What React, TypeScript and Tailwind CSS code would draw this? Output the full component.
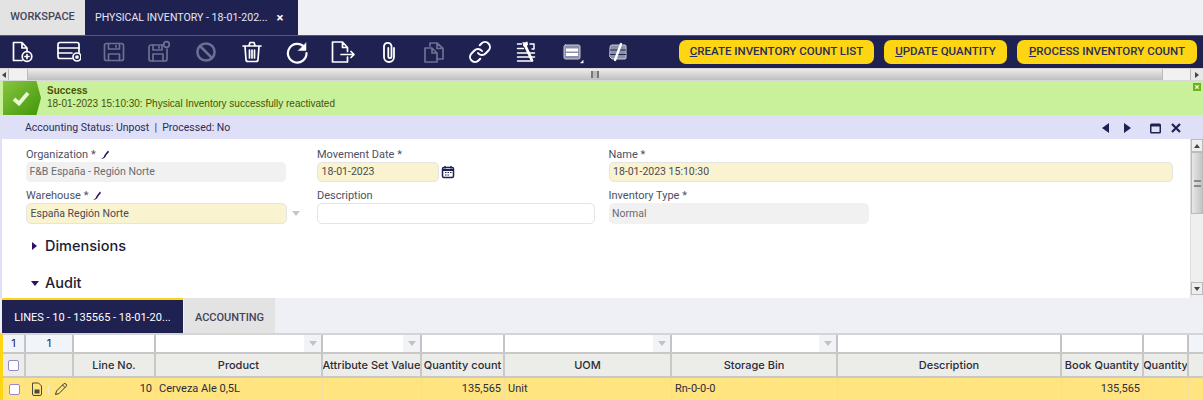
import { Link as LinkIcon } from 'lucide-react';

const NAVY = '#1f2251';

function ToolIcon({ children, dim = false }: { children: React.ReactNode; dim?: boolean }) {
  return (
    <div className="w-[45.75px] flex justify-center shrink-0">
      <svg
        width="24"
        height="24"
        viewBox="0 0 24 24"
        fill="none"
        stroke={dim ? '#6d7090' : '#ffffff'}
        strokeWidth="1.7"
        strokeLinecap="round"
        strokeLinejoin="round"
      >
        {children}
      </svg>
    </div>
  );
}

function Toolbar() {
  return (
    <div className="h-[33px] bg-[#1f2251] flex items-center border-t border-[#55587a] shrink-0">
      <ToolIcon>
        <path d="M11 20.500H2.500v-18H11l5 5.500v3M11 2.500V8h5" />
        <circle cx="16" cy="16.500" r="4.800" />
        <path d="M14 16.500h4M16 14.500v4" />
      </ToolIcon>
      <ToolIcon>
        <path d="M15 18.500H3a2 2 0 0 1-2-2v-12a2 2 0 0 1 2-2h17a2 2 0 0 1 2 2v8" />
        <path d="M1 8h21M1 13h14" />
        <circle cx="20" cy="17" r="4" />
        <circle cx="20" cy="17" r="1" fill="#fff" />
      </ToolIcon>
      <ToolIcon dim>
        <rect x="2.500" y="3.500" width="19" height="17" rx="2" />
        <path d="M6.500 3.500V9h11V3.500M14 5.500v1.500M6.500 20.500V14h11v6.500" />
      </ToolIcon>
      <ToolIcon dim>
        <path d="M15 5H3a2 2 0 0 0-2 2v12a2 2 0 0 0 2 2h14a2 2 0 0 0 2-2V9" />
        <path d="M5 5v5h9V5M11 6.500V8M5 21v-7h10v7" />
        <circle cx="18.500" cy="4.500" r="2.800" />
      </ToolIcon>
      <ToolIcon dim>
        <circle cx="12" cy="12" r="8.600" strokeWidth="2.500" />
        <path d="M6 6l12 12" strokeWidth="2.500" />
      </ToolIcon>
      <ToolIcon>
        <path d="M3 6h18M9 5.500L10 2.500h4l1 3M5 6.500l1 13a2 2 0 0 0 2 2h8a2 2 0 0 0 2-2l1-13M9.500 10v8M12 10v8M14.500 10v8" />
      </ToolIcon>
      <ToolIcon>
        <path d="M19.500 7.500a9.300 9.300 0 1 0 2 5.500" strokeWidth="2.200" />
        <path d="M21 3v7.500h-7.500z" fill="#fff" strokeWidth="0.500" />
      </ToolIcon>
      <ToolIcon>
        <path d="M1.500 2h10l5 5.500v4M11.500 2v5.500h5M1.500 2v20h15v-5" />
        <path d="M10 14.500h13M20 11.500l3 3-3 3" />
      </ToolIcon>
      <ToolIcon>
        <path d="M17 8v9a5 5 0 0 1-10 0V6a3.800 3.800 0 0 1 7.500 0v10.500a1.600 1.600 0 0 1-3.200 0V8" strokeWidth="1.800" />
      </ToolIcon>
      <ToolIcon dim>
        <path d="M7 6V3h7l6 5.500V19h-6M14 3v5.500h6" />
        <path d="M2 8h7l5 5v9H2zM9 8v5h5" />
      </ToolIcon>
      <div className="w-[45.75px] flex justify-center shrink-0 text-white">
        <LinkIcon size={24} strokeWidth={2} />
      </div>
      <ToolIcon>
        <path d="M3.500 4h4M3.500 8.500h6M3.500 13h17M3.500 17h17M3.500 21h13M16 4h4v5h-2" strokeWidth="1.500" />
        <path d="M11 5l7 15.500" strokeWidth="2.800" />
        <path d="M9 2.500l1 4 3.500-1.500-.5-3" fill="#fff" strokeWidth="1" />
      </ToolIcon>
      <ToolIcon>
        <rect x="4" y="5" width="16" height="14" rx="1.500" fill="#8d8faa" stroke="#c9cad8" strokeWidth="1" />
        <path d="M6 10h12M6 14.500h12" strokeWidth="3" strokeLinecap="butt" />
        <path d="M23 23h-2.500l2.500-2.500z" fill="#fff" strokeWidth="0.500" />
      </ToolIcon>
      <ToolIcon>
        <path d="M4 7a2 2 0 0 1 2-2h13a1 1 0 0 1 1 1v12a1 1 0 0 1-1 1H6l-2-2z" fill="#8d8faa" stroke="#c9cad8" strokeWidth="1" />
        <path d="M4.500 10h15M4.500 14.500h15" stroke="#1f2251" strokeWidth="1" />
        <path d="M9 20l6-16" strokeWidth="2.400" />
      </ToolIcon>
      <div className="flex-1 flex items-center justify-end gap-[10px] pr-[6px]">
        <ActionButton w="w-[195px]" first="C" rest="REATE INVENTORY COUNT LIST" />
        <ActionButton w="w-[123px]" first="U" rest="PDATE QUANTITY" />
        <ActionButton w="w-[180px]" first="P" rest="ROCESS INVENTORY COUNT" />
      </div>
    </div>
  );
}

function ActionButton({ w, first, rest }: { w: string; first: string; rest: string }) {
  return (
    <div className={`${w} h-[24px] rounded-[7px] bg-[#fdd513] text-[#2a2d5a] font-['Roboto',sans-serif] text-[11.500px] font-medium flex items-center justify-center whitespace-nowrap`}>
      <span className="underline">{first}</span>
      {rest}
    </div>
  );
}

function HScroll() {
  return (
    <div className="h-[13px] flex items-stretch bg-[#f1f1f1] border-y border-[#d8d8d8] shrink-0">
      <div className="w-[9px] bg-[#e8e8e8] border-r border-[#bbb] flex items-center justify-center">
        <svg width="4" height="6" viewBox="0 0 4 6"><path d="M4 0v6L0 3z" fill="#444" /></svg>
      </div>
      <div className="w-[18px]" />
      <div className="flex-1 bg-gradient-to-b from-[#ececec] to-[#bfbfbf] border-x border-[#bbb] flex items-center justify-center">
        <div className="w-[8px] h-[7px] border-x-2 border-[#777] bg-[#bbb]" />
      </div>
      <div className="w-[27px]" />
      <div className="w-[13px] bg-[#e8e8e8] border-l border-[#bbb] flex items-center justify-center">
        <svg width="4" height="6" viewBox="0 0 4 6"><path d="M0 0v6l4-3z" fill="#444" /></svg>
      </div>
    </div>
  );
}

function SuccessBar() {
  return (
    <div className="h-[34px] bg-[#c9f09a] flex shrink-0 pl-[3px]">
      <div className="relative w-[38px] bg-gradient-to-br from-[#86c63c] to-[#3f9604] flex items-center justify-center [clip-path:polygon(0_0,88%_0,100%_50%,88%_100%,0_100%)]">
        <svg width="18" height="15" viewBox="0 0 18 15" fill="none" className="-ml-[3px]">
          <path d="M2 8l5 4.500L16 2" stroke="#eaf6d8" strokeWidth="3.800" />
        </svg>
      </div>
      <div className="pl-[6px] pt-[3px] font-['Liberation_Sans',sans-serif] text-[10px] leading-[13px] text-[#4a5204] flex-1">
        <div className="font-bold">Success</div>
        <div>18-01-2023 15:10:30: Physical Inventory successfully reactivated</div>
      </div>
      <div className="pt-[2px] pr-[2px]">
        <div className="w-[8px] h-[8px] bg-[#69b520] text-white text-[8px] leading-[8px] text-center font-bold">×</div>
      </div>
    </div>
  );
}

function StatusBar() {
  return (
    <div className="h-[24px] bg-[#dfe0f7] flex items-center pl-[25px] pr-[21px] pt-[1px] shrink-0 font-['Roboto',sans-serif] text-[10.500px] text-[#2b2d55]">
      <span>Accounting Status: Unpost&nbsp; |&nbsp; Processed: No</span>
      <div className="flex-1" />
      <svg width="60" height="12" viewBox="0 0 60 12" fill={NAVY}>
        <path d="M1 6l7-5v10zM23 1l7 5-7 5z" />
        <path d="M50.500 1.500h8A1.500 1.500 0 0 1 60 3v7a1.500 1.500 0 0 1-1.500 1.500h-8A1.500 1.500 0 0 1 49 10V3a1.500 1.500 0 0 1 1.500-1.500zM50.500 4.500v5.500h8V4.500z" fillRule="evenodd" />
      </svg>
      <svg width="12" height="12" viewBox="0 0 12 12" stroke={NAVY} strokeWidth="2.200" className="ml-[9px]">
        <path d="M2 2l8 8M10 2l-8 8" />
      </svg>
    </div>
  );
}

function Pencil() {
  return (
    <svg width="10" height="11" viewBox="0 0 10 11" className="ml-[4px]">
      <path d="M1 10c1.500-.500 3-2 3.500-4L8 1.500 9 3 6 6.500C5.500 8.500 3.500 10 1 10z" fill="#2e1065" />
    </svg>
  );
}

function Label({ children, pencil = false }: { children: React.ReactNode; pencil?: boolean }) {
  return (
    <div className="h-[15px] font-['Roboto',sans-serif] text-[11px] leading-[15px] text-[#4d4f66] flex items-center">
      {children}
      {pencil && <Pencil />}
    </div>
  );
}

function Input({ value = '', tone, w, h = 'h-[20px]', border = false }: { value?: string; tone: 'gray' | 'yellow' | 'white'; w: string; h?: string; border?: boolean }) {
  const bg = tone === 'gray' ? 'bg-[#f1f1f1] text-[#6b6b72]' : tone === 'yellow' ? 'bg-[#faf3cf] text-[#4a4a55]' : 'bg-white';
  return (
    <div className={`${w} ${h} ${bg} ${border ? 'border border-[#e4e4e4]' : ''} rounded-[5px] flex items-center pl-[3.500px] font-['Roboto',sans-serif] text-[10.500px] whitespace-nowrap`}>
      {value}
    </div>
  );
}

function Form() {
  return (
    <div className="h-[159px] bg-white flex border-l-[2px] border-[#dfe0f7] shrink-0 overflow-hidden">
      <div className="flex-1 pl-[24px] pt-[8px]">
        <div className="grid grid-cols-[291px_291.5px_1fr] gap-y-[6px]">
          <div>
            <Label pencil>Organization *</Label>
            <Input tone="gray" value="F&B España - Región Norte" w="w-[260px]" />
          </div>
          <div>
            <Label>Movement Date *</Label>
            <div className="flex items-center">
              <Input tone="yellow" value="18-01-2023" w="w-[122px]" border />
              <svg width="14" height="14" viewBox="0 0 14 14" className="ml-[2px]">
                <rect x="1.500" y="2.500" width="11" height="10" rx="1.500" fill="none" stroke={NAVY} strokeWidth="1.500" />
                <path d="M1.500 5h11" stroke={NAVY} strokeWidth="2" />
                <path d="M4 1v2.500M10 1v2.500" stroke={NAVY} strokeWidth="1.500" />
                <path d="M4 7.500h1.500M6.500 7.500H8M9 7.500h1.500M4 10h1.500M6.500 10H8" stroke={NAVY} strokeWidth="1" />
              </svg>
            </div>
          </div>
          <div>
            <Label>Name *</Label>
            <Input tone="yellow" value="18-01-2023 15:10:30" w="w-[564px]" border />
          </div>
          <div>
            <Label pencil>Warehouse *</Label>
            <div className="flex items-center">
              <Input tone="yellow" value="España Región Norte" w="w-[261px]" h="h-[21px]" border />
              <svg width="8" height="6" viewBox="0 0 8 6" className="ml-[5px]">
                <path d="M0 0h8L4 5z" fill="#c6c6c6" />
              </svg>
            </div>
          </div>
          <div>
            <Label>Description</Label>
            <Input tone="white" w="w-[278px]" h="h-[21px]" border />
          </div>
          <div>
            <Label>Inventory Type *</Label>
            <Input tone="gray" value="Normal" w="w-[260px]" h="h-[21px]" />
          </div>
        </div>
        <div className="mt-[11px] h-[22px] pl-[6px] flex items-center gap-[8px] text-[14.500px] font-medium text-[#1c1c33]">
          <svg width="5" height="8" viewBox="0 0 5 8"><path d="M0 0l5 4-5 4z" fill="#2e1065" /></svg>
          Dimensions
        </div>
        <div className="mt-[15px] h-[22px] pl-[5px] flex items-center gap-[6px] text-[14.500px] font-medium text-[#1c1c33]">
          <svg width="8" height="5" viewBox="0 0 8 5"><path d="M0 0h8L4 5z" fill="#2e1065" /></svg>
          Audit
        </div>
      </div>
      <VScroll />
    </div>
  );
}

function VScroll() {
  return (
    <div className="w-[13px] bg-[#efefef] flex flex-col shrink-0 border-l border-[#ddd]">
      <div className="h-[13px] bg-[#eee] border border-[#bbb] flex items-center justify-center">
        <svg width="6" height="4" viewBox="0 0 6 4"><path d="M0 4h6L3 0z" fill="#444" /></svg>
      </div>
      <div className="h-[62px] bg-gradient-to-r from-[#e8e8e8] to-[#c4c4c4] border border-[#bbb] flex items-center justify-center">
        <div className="w-[7px] h-[7px] border-y-2 border-[#888]" />
      </div>
      <div className="flex-1" />
      <div className="h-[13px] bg-[#eee] border border-[#bbb] flex items-center justify-center">
        <svg width="6" height="4" viewBox="0 0 6 4"><path d="M0 0h6L3 4z" fill="#444" /></svg>
      </div>
      <div className="h-[3px]" />
    </div>
  );
}

function Tabs() {
  return (
    <div className="h-[35px] bg-[#eef0f5] flex shrink-0 pl-[2px] font-['Roboto',sans-serif]">
      <div className="w-[181px] border-t-2 border-[#fdd513] bg-[#1f2251] text-white text-[11px] pt-[3px] flex items-center justify-center whitespace-nowrap">
        LINES - 10 - 135565 - 18-01-20...
      </div>
      <div className="w-[91px] ml-[1px] border-t-2 border-[#e3e3e3] bg-[#e3e3e3] text-[#44445a] text-[11px] font-medium pt-[3px] flex items-center justify-center">
        ACCOUNTING
      </div>
    </div>
  );
}

const cols = [
  { w: 'w-[23px]', head: '', filter: '1', cell: '' },
  { w: 'w-[48px]', head: '', filter: '1', cell: '' },
  { w: 'w-[82px]', head: 'Line No.', filter: '', cell: '10', right: true },
  { w: 'w-[167px]', head: 'Product', filter: '', cell: 'Cerveza Ale 0,5L', drop: true },
  { w: 'w-[99px]', head: 'Attribute Set Value', filter: '', cell: '', drop: true },
  { w: 'w-[83px]', head: 'Quantity count', filter: '', cell: '135,565', right: true },
  { w: 'w-[167px]', head: 'UOM', filter: '', cell: 'Unit', drop: true },
  { w: 'w-[166px]', head: 'Storage Bin', filter: '', cell: 'Rn-0-0-0', drop: true },
  { w: 'w-[224px]', head: 'Description', filter: '', cell: '' },
  { w: 'w-[82px]', head: 'Book Quantity', filter: '', cell: '135,565', right: true },
  { w: 'w-[45px]', head: 'Quantity', filter: '', cell: '' },
];

function Grid() {
  return (
    <div className="flex-1 flex flex-col border-l-[3px] border-[#fdd513] text-[11px] text-[#2b2b3a] overflow-hidden border-t-2 border-t-[#d4d4d4] min-h-0">
      <div className="h-[17px] flex shrink-0">
        {cols.map((c, i) => (
          <div key={i} className={`${c.w} shrink-0 border-r-2 border-[#c4c4c4] flex items-center ${c.filter ? 'bg-[#f1f5f9] justify-center text-[#1f2251]' : 'bg-white justify-end'}`}>
            {c.filter}
            {c.drop && (
              <div className="w-[17px] h-full bg-[#f1f3f7] flex items-center justify-center">
                <svg width="8" height="5" viewBox="0 0 8 5"><path d="M0 0h8L4 5z" fill="#c2c2c2" /></svg>
              </div>
            )}
          </div>
        ))}
        <div className="flex-1 bg-[#f1f5f9]" />
      </div>
      <div className="h-[26px] flex shrink-0 border-y-2 border-[#c8c8c8] bg-[#ecede8] font-medium">
        {cols.map((c, i) => (
          <div key={i} className={`${c.w} shrink-0 border-r-2 border-[#c8c8c8] flex items-center justify-center whitespace-nowrap overflow-hidden`}>
            {i === 0 && <div className="w-[11px] h-[11px] bg-white border border-[#9a86c8] rounded-[2px]" />}
            {c.head}
          </div>
        ))}
      </div>
      <div className="flex-1 flex bg-[#ffe480] min-h-0 font-['Roboto',sans-serif]">
        {cols.map((c, i) => (
          <div key={i} className={`${c.w} shrink-0 border-r border-[#f0dfa0] flex items-center whitespace-nowrap px-[3px] ${c.right ? 'justify-end' : ''} ${i < 2 ? 'justify-center' : ''}`}>
            {i === 0 && <div className="w-[11px] h-[11px] bg-white border border-[#9a86c8] rounded-[2px]" />}
            {i === 1 && (
              <div className="flex items-center gap-[5px]">
                <svg width="12" height="14" viewBox="0 0 12 14" fill="none" stroke="#4a4a3a" strokeWidth="1">
                  <path d="M1.500 1h6l3 3v8a1.500 1.500 0 0 1-1.500 1.500H3A1.500 1.500 0 0 1 1.500 12z" />
                  <rect x="4" y="8" width="4" height="3" fill="#4a4a3a" />
                </svg>
                <div className="w-px h-[9px] bg-[#eeeecc]" />
                <svg width="14" height="14" viewBox="0 0 14 14" fill="none" stroke="#3a3a30" strokeWidth="1">
                  <path d="M1.500 12.500l1-3.500 7-7a1.500 1.500 0 0 1 2.500 2.500l-7 7zM8.500 3l2.500 2.500" />
                </svg>
              </div>
            )}
            {c.cell}
          </div>
        ))}
      </div>
    </div>
  );
}

export default function App() {
  return (
    <div className="w-[1203px] h-[400px] overflow-hidden flex flex-col bg-white font-['Inter',sans-serif]">
      <div className="h-[35px] bg-[#eff0f5] flex shrink-0 font-['Roboto',sans-serif]">
        <div className="w-[85px] bg-[#e3e3e3] text-[#44445a] text-[11px] font-medium flex items-center justify-center">WORKSPACE</div>
        <div className="w-[213px] bg-[#1f2251] text-[#e4e6f5] text-[10.600px] flex items-center pl-[10px] whitespace-nowrap">
          PHYSICAL INVENTORY - 18-01-202...
          <span className="ml-[9px] text-white font-bold text-[13px]">×</span>
        </div>
      </div>
      <Toolbar />
      <HScroll />
      <SuccessBar />
      <StatusBar />
      <Form />
      <Tabs />
      <Grid />
    </div>
  );
}
